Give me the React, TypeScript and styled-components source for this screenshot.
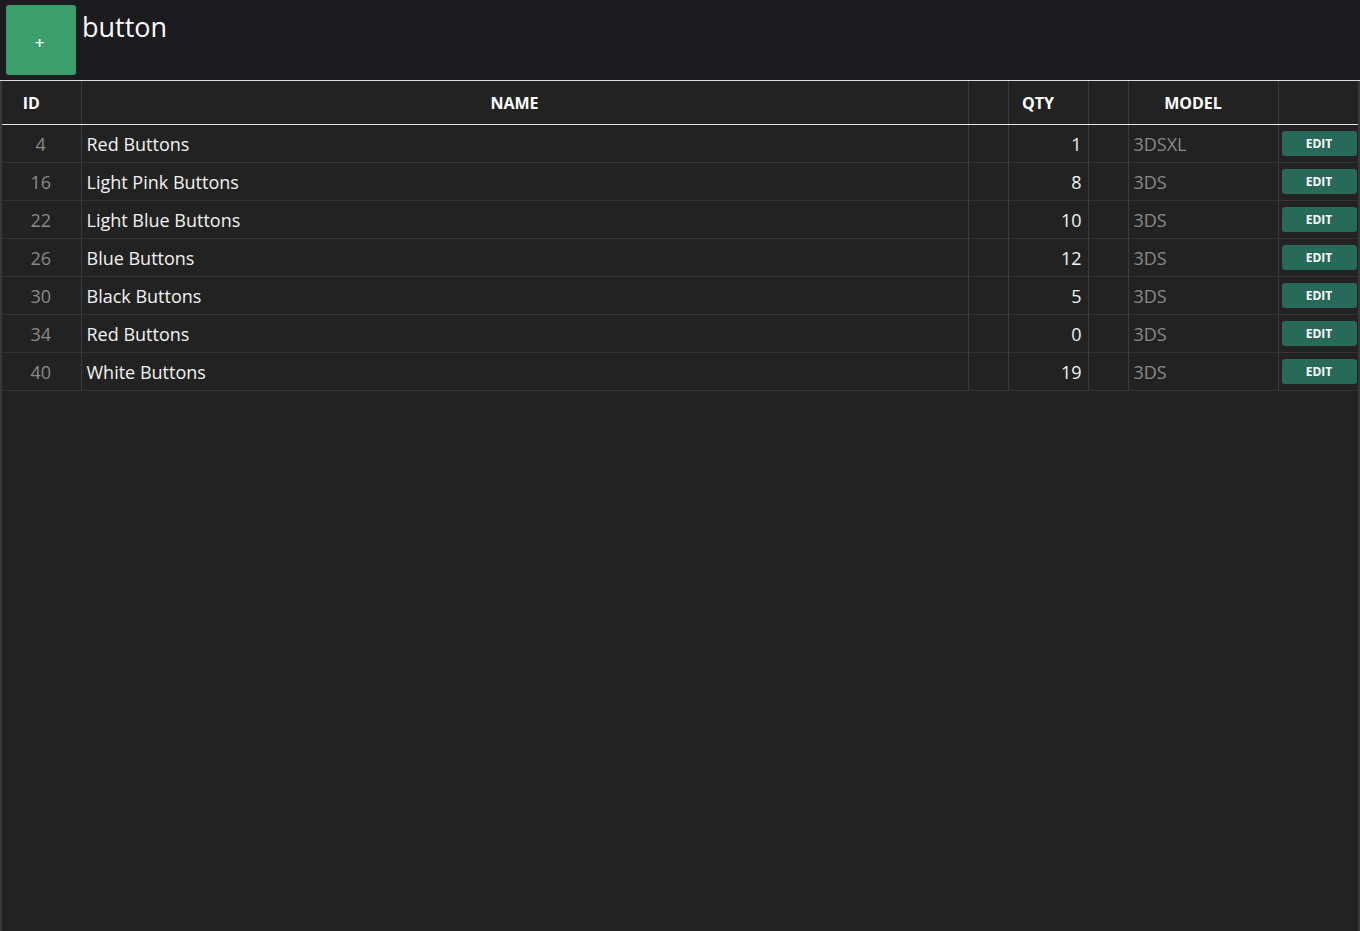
import React from "react";
import styled, { createGlobalStyle } from "styled-components";

const GlobalStyle = createGlobalStyle`
  html, body {
    margin: 0;
    padding: 0;
    background: #222222;
    height: 100%;
  }
  #root {
    min-height: 100%;
  }
  * { box-sizing: border-box; }
`;

const Page = styled.div`
  min-height: 931px;
  display: flex;
  flex-direction: column;
  background: #222222;
  font-family: "Open Sans", "Noto Sans", sans-serif;
  color: #f0f0f0;
`;

const TopBar = styled.div`
  height: 81px;
  background: #1b1b20;
  display: flex;
  align-items: flex-start;
  gap: 6px;
  padding: 5px 6px;
  border-bottom: 1px solid #dcdcdc;
`;

const AddButton = styled.button`
  width: 70px;
  height: 70px;
  border: none;
  border-radius: 3px;
  background: #3a9e6d;
  color: #ffffff;
  font-family: "Open Sans", sans-serif;
  font-size: 17px;
  font-weight: 600;
  padding: 4px 3px 0 0;
  cursor: pointer;
`;

const SearchInput = styled.input`
  flex: 1;
  height: 44px;
  margin-top: -1px;
  background: transparent;
  border: none;
  outline: none;
  color: #ffffff;
  caret-color: #ffffff;
  font-family: "Open Sans", sans-serif;
  font-size: 27px;
  padding: 0;
`;

const TableArea = styled.div`
  flex: 1;
  border-left: 2px solid #38383c;
  border-right: 2px solid #38383c;
`;

const Table = styled.table`
  width: 100%;
  border-collapse: collapse;
  table-layout: fixed;
`;

const HeadCell = styled.th`
  height: 43px;
  padding: 2px 20px 0 0;
  font-size: 16px;
  font-weight: 700;
  color: #ffffff;
  text-align: center;
  border-bottom: 1px solid #e6e6e6;
  border-right: 1px solid #3a3a44;
  &:last-child { border-right: none; }
`;

const Row = styled.tr`
  border-bottom: 1px solid #333338;
`;

const Cell = styled.td<{ $align?: "left" | "center" | "right"; $muted?: boolean }>`
  height: 38px;
  padding: 2px 6px 0 5px;
  font-size: 18px;
  text-align: ${(p) => p.$align ?? "left"};
  color: ${(p) => (p.$muted ? "#8a8a8a" : "#f2f2f2")};
  border-right: 1px solid #3a3a44;
  white-space: nowrap;
  overflow: hidden;
  &:last-child { border-right: none; padding: 1px 1px 0 3px; }
`;

const EditButton = styled.button`
  width: 75px;
  height: 25px;
  border: none;
  border-radius: 3px;
  background: #276a5a;
  color: #ffffff;
  font-family: "Open Sans", sans-serif;
  font-size: 12px;
  font-weight: 700;
  display: block;
  cursor: pointer;
`;

type Item = { id: number; name: string; qty: number; model: string };

const items: Item[] = [
  { id: 4, name: "Red Buttons", qty: 1, model: "3DSXL" },
  { id: 16, name: "Light Pink Buttons", qty: 8, model: "3DS" },
  { id: 22, name: "Light Blue Buttons", qty: 10, model: "3DS" },
  { id: 26, name: "Blue Buttons", qty: 12, model: "3DS" },
  { id: 30, name: "Black Buttons", qty: 5, model: "3DS" },
  { id: 34, name: "Red Buttons", qty: 0, model: "3DS" },
  { id: 40, name: "White Buttons", qty: 19, model: "3DS" },
];

export default function App() {
  return (
    <Page>
      <GlobalStyle />
      <TopBar>
        <AddButton>+</AddButton>
        <SearchInput defaultValue="button" autoFocus />
      </TopBar>
      <TableArea>
        <Table>
          <colgroup>
            <col style={{ width: 79 }} />
            <col style={{ width: 887 }} />
            <col style={{ width: 40 }} />
            <col style={{ width: 80 }} />
            <col style={{ width: 40 }} />
            <col style={{ width: 150 }} />
            <col style={{ width: 80 }} />
          </colgroup>
          <thead>
            <tr>
              <HeadCell>ID</HeadCell>
              <HeadCell>NAME</HeadCell>
              <HeadCell />
              <HeadCell>QTY</HeadCell>
              <HeadCell />
              <HeadCell>MODEL</HeadCell>
              <HeadCell />
            </tr>
          </thead>
          <tbody>
            {items.map((it) => (
              <Row key={it.id}>
                <Cell $align="center" $muted>{it.id}</Cell>
                <Cell>{it.name}</Cell>
                <Cell />
                <Cell $align="right">{it.qty}</Cell>
                <Cell />
                <Cell $muted>{it.model}</Cell>
                <Cell>
                  <EditButton>EDIT</EditButton>
                </Cell>
              </Row>
            ))}
          </tbody>
        </Table>
      </TableArea>
    </Page>
  );
}
